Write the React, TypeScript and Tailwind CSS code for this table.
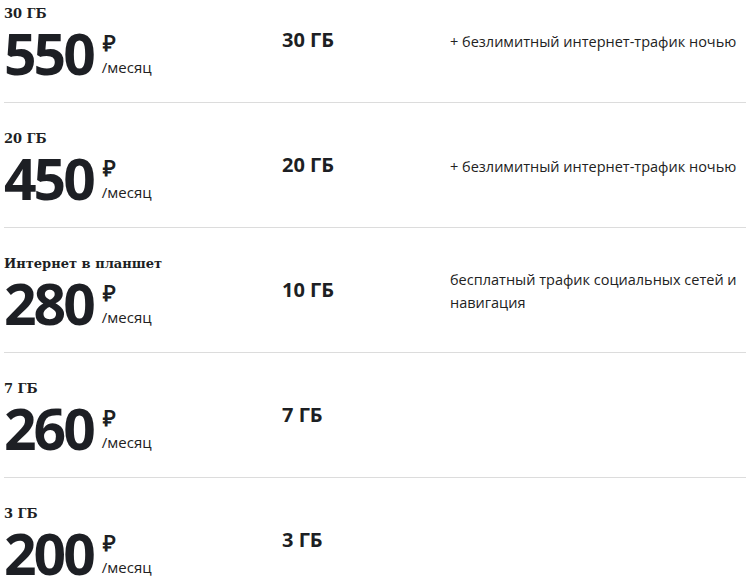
import React from "react";

const rows = [
  { title: "30 ГБ", price: "550", gb: "30 ГБ", desc: ["+ безлимитный интернет-трафик ночью"] },
  { title: "20 ГБ", price: "450", gb: "20 ГБ", desc: ["+ безлимитный интернет-трафик ночью"] },
  { title: "Интернет в планшет", price: "280", gb: "10 ГБ", desc: ["бесплатный трафик социальных сетей и", "навигация"] },
  { title: "7 ГБ", price: "260", gb: "7 ГБ", desc: [] },
  { title: "3 ГБ", price: "200", gb: "3 ГБ", desc: [] },
];

export default function App() {
  return (
    <div className="w-[746px] h-[586px] overflow-hidden bg-white text-[#1d1f24]">
      <div className="-mt-[22px] pl-[4px]">
        {rows.map((r, i) => (
          <div
            key={i}
            className={`grid grid-cols-[278px_168px_1fr] h-[125px] ${i < rows.length - 1 ? "border-b border-[#dcdcdc]" : ""}`}
          >
            <div className="pt-[27px]">
              <div className="text-[13px] leading-[18px] font-bold" style={{ fontFamily: '"DejaVu Serif", serif' }}>
                {r.title}
              </div>
              <div className="flex items-start mt-[1px]" style={{ fontFamily: '"Open Sans", sans-serif' }}>
                <div className="text-[57px] leading-[58px] font-bold tracking-[-3px]">{r.price}</div>
                <div className="flex flex-col ml-[10px]">
                  <div className="text-[22px] leading-[24px] font-bold mt-[6px]">₽</div>
                  <div className="text-[15px] leading-[20px] mt-[3px] -ml-[1px] text-[#222]">/месяц</div>
                </div>
              </div>
            </div>
            <div className="pt-[49px] text-[20px] leading-[26px] font-bold" style={{ fontFamily: '"Open Sans", sans-serif' }}>
              {r.gb}
            </div>
            <div
              className="mt-[30px] h-[66px] flex flex-col justify-center text-[14.5px] leading-[23px] text-[#222]"
              style={{ fontFamily: '"Open Sans", sans-serif' }}
            >
              {r.desc.map((d, j) => (
                <div key={j}>{d}</div>
              ))}
            </div>
          </div>
        ))}
      </div>
    </div>
  );
}
